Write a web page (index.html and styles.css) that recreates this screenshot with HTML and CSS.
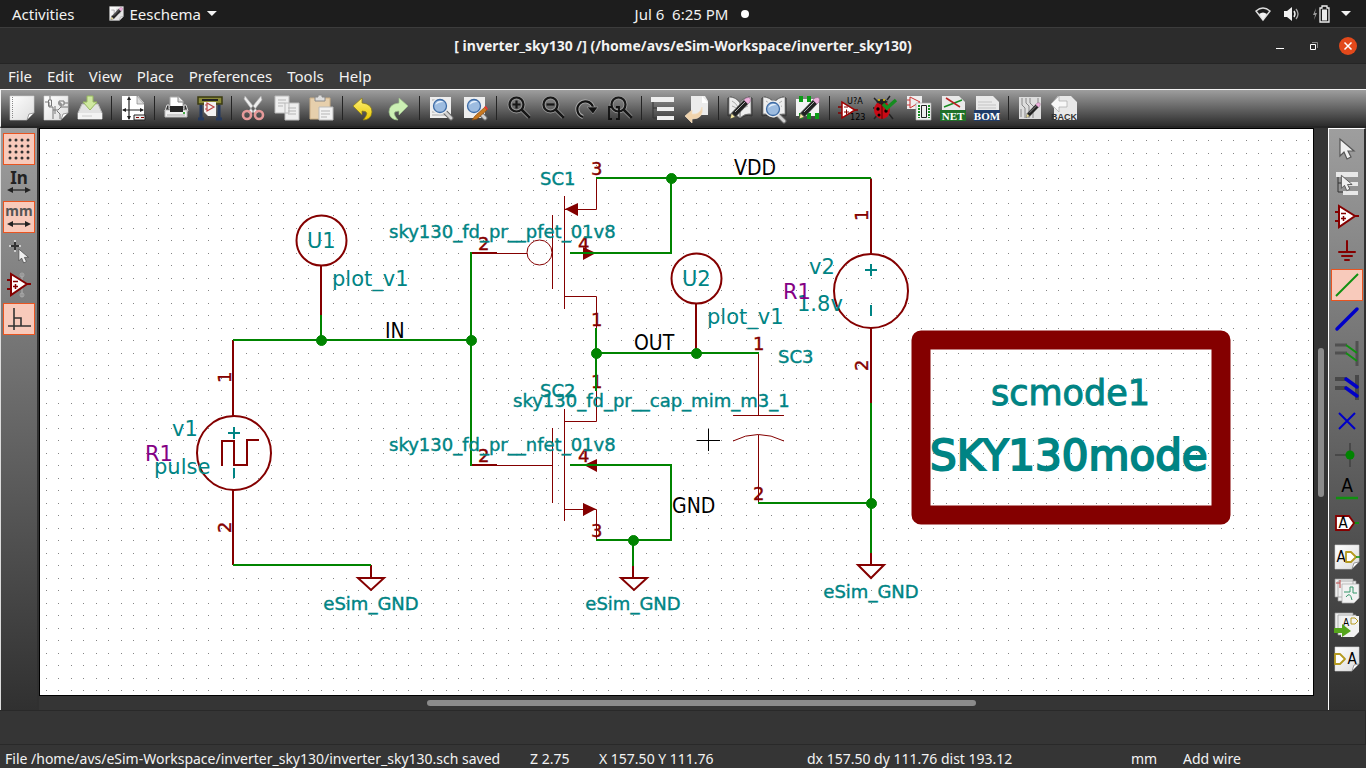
FILE: index.html
```html
<!DOCTYPE html>
<html lang="en">
<head>
<meta charset="utf-8">
<title>[ inverter_sky130 /] (/home/avs/eSim-Workspace/inverter_sky130)</title>
<link rel="stylesheet" href="styles.css">
</head>
<body>
<svg class="defs" aria-hidden="true">
  <defs>
    <linearGradient id="paper" x1="0" y1="0" x2="1" y2="1"><stop offset="0" stop-color="#fff"/><stop offset="1" stop-color="#dcdcdc"/></linearGradient>
    <linearGradient id="gold" x1="0" y1="0" x2="0" y2="1"><stop offset="0" stop-color="#fff07a"/><stop offset="1" stop-color="#e8c800"/></linearGradient>
    <symbol id="page" viewBox="0 0 26 26"><path d="M1 1h24v17l-7 7H1z" fill="url(#paper)" stroke="#d0d0d0" stroke-width=".6"/><path d="M18 25l2-6 5-1z" fill="#fff" stroke="#777" stroke-width=".7"/></symbol>
    <symbol id="lens" viewBox="0 0 26 26"><path d="M17 17l6 6" stroke="#666" stroke-width="5" stroke-linecap="round"/><path d="M17 17l6 6" stroke="#d2d2d2" stroke-width="3" stroke-linecap="round"/><circle cx="12" cy="11" r="7" fill="#a9c4e4" stroke="#eee" stroke-width="3"/><circle cx="12" cy="11" r="6.5" fill="#9dbce0" stroke="#3d6ba5" stroke-width="1.3"/><path d="M7.500 10a5 5 0 0 1 8-3q-5 0-8 3z" fill="#e8f2fc"/></symbol>
    <symbol id="darklens" viewBox="0 0 26 26"><g fill="none" stroke="#999" stroke-width="4"><circle cx="10.500" cy="9.500" r="7"/><path d="M16 15l7 7"/></g><g fill="none" stroke="#171717"><circle cx="10.500" cy="9.500" r="7" stroke-width="2.200"/><path d="M16 15l7 7" stroke-width="2.600" stroke-linecap="round"/></g></symbol>
    <symbol id="pencil" viewBox="0 0 26 26"><path d="M3 24l1.500-6 4 4z" fill="#f6e9a0" stroke="#333" stroke-width=".6"/><path d="M4.500 18L17 5l4 4L8.500 22z" fill="#222" stroke="#666" stroke-width=".6"/><path d="M8 17L19 6" stroke="#aaa"/><path d="M17 5l2-2q3-1 4 0t0 4l-2 2z" fill="#eeb0dc" stroke="#93648a" stroke-width=".6"/></symbol>
    <symbol id="book" viewBox="0 0 26 26"><path d="M1 3v18q7-2 12 3 5-5 12-3V3l-3-1q-6 1-9 6Q10 3 4 2z" fill="#555" stroke="#333"/><path d="M2 2q7 0 11 6v15Q8 18 2 19zM24 2q-7 0-11 6v15q5-5 11-4z" fill="#eee" stroke="#777" stroke-width=".7"/><path d="M5 6q4 2 6 6M5 11q4 1 6 4M21 6q-4 2-6 6M21 11q-4 1-6 4" fill="none" stroke="#aaa"/></symbol>
    <symbol id="opamp" viewBox="0 0 26 26"><path d="M1 8h5M1 17h5M20 12h5" stroke="#840000" stroke-width="2"/><path d="M5 2v21l16-11z" fill="#fff" stroke="#840000" stroke-width="2"/><path d="M7 9.500h5M7 14.500h5M9.500 12v5" stroke="#840000" stroke-width="1.500"/></symbol>
    <symbol id="pointer" viewBox="0 0 26 26"><path d="M7 3v17l4-4 3 7 4-2-3-6h6z" fill="#f0f0f0" stroke="#555" stroke-width="1.200"/></symbol>
    <symbol id="arrows" viewBox="0 0 26 26"><path d="M5 20h16" stroke="#333" stroke-width="1.500"/><path d="M1 20l6-3v6zM25 20l-6-3v6z" fill="#222"/></symbol>
    <symbol id="tag" viewBox="0 0 26 26"><path d="M1 7h5l5 5-5 5H1z" fill="#fff" stroke="#b59a20" stroke-width="1.800" stroke-linejoin="round"/></symbol>
    <pattern id="dots" x="33" y="127" width="25" height="25" patternUnits="userSpaceOnUse"><path d="M0 1h1v1H0zM13 1h1v1h-1zM0 13h1v1H0zM13 13h1v1h-1z" fill="#848484"/></pattern>
  </defs>
</svg>
<div class="desktop">
  <header class="topbar">
    <div class="top-left">
      <button>Activities</button>
      <button class="app"><svg class="small" viewBox="0 0 26 26"><use href="#page"/><path d="M4 7h5v8M4 17h6M14 5v7h6" fill="none" stroke="#888"/><use href="#pencil"/></svg>Eeschema<i class="caret"></i></button>
    </div>
    <div class="clock"><time>Jul 6&nbsp; 6:25 PM</time><i class="dot"></i></div>
    <div class="tray">
      <svg width="18" height="16" viewBox="0 0 18 16"><path d="M2 5Q9-1 16 5L9 14z" fill="none" stroke="#ddd" stroke-width="1.400"/><path d="M5 8q4-3 8 0l-4 6z" fill="#f2f2f2"/></svg>
      <svg width="18" height="16" viewBox="0 0 18 16"><path d="M1 5h3l5-4v14l-5-4H1z" fill="#f2f2f2"/><path d="M11 5q2 3 0 6" fill="none" stroke="#eee" stroke-width="1.500"/><path d="M13 3q4 5 0 10" fill="none" stroke="#aaa" stroke-width="1.300"/></svg>
      <svg width="18" height="18" viewBox="0 0 18 18"><path d="M4 3L1 10h2l-1 5 3-7H3z" fill="#999"/><path d="M10 1h5v2h2v14H8V3h2z" fill="none" stroke="#eee" stroke-width="1.300"/><path d="M10 4.500h5v11h-5z" fill="#eee"/></svg>
      <i class="caret"></i>
    </div>
  </header>
  <div class="titlebar">
    <h1>[ inverter_sky130 /] (/home/avs/eSim-Workspace/inverter_sky130)</h1>
    <div class="controls">
      <button aria-label="Minimize"><svg width="18" height="18"><path d="M5 11.500h8" stroke="#fff"/></svg></button>
      <button aria-label="Restore"><svg width="18" height="18"><path d="M7 5.500h5.500V11" fill="none" stroke="#888"/><path d="M5.500 7.500h5v5h-5z" fill="none" stroke="#fff"/></svg></button>
      <button class="close" aria-label="Close"><svg width="18" height="18"><path d="M5.500 5.500l7 7M12.500 5.500l-7 7" stroke="#fff" stroke-width="1.500"/></svg></button>
    </div>
  </div>
  <nav class="menu"><button>File</button><button>Edit</button><button>View</button><button>Place</button><button>Preferences</button><button>Tools</button><button>Help</button></nav>
  <div class="toolbar" role="toolbar">
    <button aria-label="New"><svg viewBox="0 0 26 26"><use href="#page"/><path d="M3.500 2v22" stroke="#888" stroke-dasharray="1 1"/></svg></button>
    <button aria-label="Open"><svg viewBox="0 0 26 26"><use href="#page"/><path d="M2 7h4v5h4v12M7 1v4M5.500 5h3v6h-3zM10 15h5l3-3h7M18 12V8h-3M16 6h5v4h-5zM21 8h4M12 11v8M14 16l3 3v5" fill="none" stroke="#777"/></svg></button>
    <button aria-label="Save"><svg viewBox="0 0 26 26"><path d="M5 9h16l4 9v6H1v-6z" fill="#e2e2e2" stroke="#bbb"/><path d="M1 18h24v6H1z" fill="#f3f3f3"/><path d="M5 21h10" stroke="#ccc"/><path d="M10 1h6v6h4l-7 8-7-8h4z" fill="#cfe8a0" stroke="#98b960"/></svg></button>
    <span class="sep"></span>
    <button aria-label="Page settings"><svg viewBox="0 0 26 26"><path d="M2 1h16l6 7v17H2z" fill="#fff"/><path d="M17 1v8h7z" fill="#ddd" stroke="#888" stroke-width=".7"/><path d="M3 15h20M9 3v21" stroke="#222" stroke-width="1.200"/><path d="M2 15l4-2v4zM24 15l-4-2v4zM9 1L7 5h4zM9 25l-2-4h4z" fill="#222"/><path d="M14 20h11v5H14z" fill="#eee" stroke="#222"/><path d="M16 22.500h3M21 22.500h3" stroke="#840000"/></svg></button>
    <span class="sep"></span>
    <button aria-label="Print"><svg viewBox="0 0 26 26"><path d="M7 12V2h9l4 4v6z" fill="#fff" stroke="#aaa"/><path d="M15 2v5h5" fill="#ddd" stroke="#888"/><path d="M4 10h2v4h15v-4h2l2 6H2z" fill="#333" stroke="#ddd"/><path d="M2 15h22v7H2z" fill="#f0f0f0" stroke="#bbb"/><path d="M7 11h13v6H7z" fill="#252525"/><path d="M4 20h18" stroke="#aaa"/><path d="M20 18h2" stroke="#4a4" stroke-width="2"/></svg></button>
    <button aria-label="Plot"><svg viewBox="0 0 26 26"><path d="M1 2h24v7H1z" fill="#8a8a38" stroke="#3a3a10" stroke-width="1.500"/><path d="M5 5h16" stroke="#222" stroke-width="2"/><path d="M4 10v14M22 10v14M1 24h6M19 24h6" stroke="#24385c" stroke-width="3"/><path d="M7 7h12v14h-8l-4-4z" fill="#f2f2f2"/><path d="M10 8v8l7-4zM8 10h2M8 14h2" fill="none" stroke="#b44" stroke-width="1.200"/></svg></button>
    <span class="sep"></span>
    <button aria-label="Cut"><svg viewBox="0 0 26 26"><path d="M5 1l13 16-3 2L4 4zM21 1L8 17l3 2L22 5z" fill="#eee" stroke="#aaa" stroke-width=".7"/><g fill="none" stroke="#e79a9a" stroke-width="2.600"><ellipse cx="7" cy="20" rx="4" ry="4"/><ellipse cx="19" cy="20" rx="4" ry="4"/></g></svg></button>
    <button aria-label="Copy"><svg viewBox="0 0 26 26"><path d="M1 1h14v17H1zM11 8h14v17H11z" fill="#eee" stroke="#bbb"/><path d="M4 5h8M4 8h7M4 11h5M14 13h8M14 16h8M14 19h8" stroke="#b5b5b5"/></svg></button>
    <button aria-label="Paste"><svg viewBox="0 0 26 26"><path d="M2 3h20v21H2z" fill="#e6cfac" stroke="#c9ae86"/><path d="M7 2h3V0h4v2h3v4H7z" fill="#ddd" stroke="#888"/><path d="M11 12h14v13H11z" fill="#f2f2f2" stroke="#bbb"/><path d="M13 16h9M13 19h9M13 22h6" stroke="#b5b5b5"/></svg></button>
    <span class="sep"></span>
    <button aria-label="Undo"><svg viewBox="0 0 26 26"><path d="M2 11l9-8v5q10 1 10 9-1 8-9 8 8-9-1-9v4z" fill="url(#gold)" stroke="#8d7d10" stroke-width=".7"/></svg></button>
    <button aria-label="Redo"><svg viewBox="0 0 26 26"><path d="M23 11l-9-8v5Q4 9 4 17q1 8 9 8-8-9 1-9v4z" fill="#ccefb4" stroke="#9fc48d" stroke-width=".7"/></svg></button>
    <span class="sep"></span>
    <button aria-label="Find"><svg viewBox="0 0 26 26"><path d="M2 2h21v21H2z" fill="#eee"/><path d="M4 5h4M4 9h3M4 20h14M4 17h8" stroke="#aaa"/><use href="#lens"/></svg></button>
    <button aria-label="Find and replace"><svg viewBox="0 0 26 26"><path d="M2 2h21v21H2z" fill="#eee"/><use href="#lens"/><path d="M10 25l3-4 10-9 2 3-10 9z" fill="#c87920" stroke="#8b4a10" stroke-width=".7"/><path d="M22 12l2-1 2 3-1 1z" fill="#e33"/></svg></button>
    <span class="sep"></span>
    <button aria-label="Zoom in"><svg viewBox="0 0 26 26"><use href="#darklens" x="1"/><path d="M7.500 9.500h8M11.500 5.500v8" stroke="#171717" stroke-width="2.200"/></svg></button>
    <button aria-label="Zoom out"><svg viewBox="0 0 26 26"><use href="#darklens" x="1"/><path d="M7.500 9.500h8" stroke="#171717" stroke-width="2.200"/></svg></button>
    <button aria-label="Redraw"><svg viewBox="0 0 26 26"><path d="M10 22A8 8 0 1 1 20 12" fill="none" stroke="#aaa" stroke-width="4"/><path d="M10 22A8 8 0 1 1 20 12" fill="none" stroke="#111" stroke-width="2.200"/><path d="M14 12h11l-5 7z" fill="#111" stroke="#999" stroke-width=".7"/></svg></button>
    <button aria-label="Zoom to fit"><svg viewBox="0 0 26 26"><use href="#darklens" x="1"/><path d="M5 12H2v12h3M9 12h3v12H9" fill="none" stroke="#111" stroke-width="1.800"/></svg></button>
    <span class="sep"></span>
    <button aria-label="Hierarchy"><svg viewBox="0 0 26 26"><path d="M3 5v18h4M3 13h4" fill="none" stroke="#333"/><path d="M1 2h23v5H1zM7 12h17v4H7zM7 21h17v4H7z" fill="#eee"/></svg></button>
    <button aria-label="Leave sheet"><svg viewBox="0 0 26 26"><path d="M7 1h14l3 5v14H7z" fill="#ececec"/><path d="M18 1v7h6z" fill="#fff"/><path d="M1 21l7-6v4q8 1 10-7 2 12-10 12v4z" fill="#f0d3ac" stroke="#f4dfc4" stroke-width=".7"/></svg></button>
    <span class="sep"></span>
    <button aria-label="Symbol editor"><svg viewBox="0 0 26 26"><use href="#book"/><use href="#pencil"/></svg></button>
    <button aria-label="Browse symbols"><svg viewBox="0 0 26 26"><use href="#book"/><use href="#lens" y="3"/></svg></button>
    <button aria-label="Footprint editor"><svg viewBox="0 0 26 26"><path d="M1 4h23v17H1z" fill="#f2f2f2"/><path d="M4 1h4v6H4zM12 1h4v6h-4zM4 18h4v6H4zM12 18h4v6h-4zM20 18h4v6h-4z" fill="#0b9b16"/><use href="#pencil" x="1"/></svg></button>
    <span class="sep"></span>
    <button aria-label="Annotate"><svg viewBox="0 0 26 26"><path d="M0 12h4M0 18h4M16 15h4" stroke="#840000" stroke-width="1.500"/><path d="M4 7v16l13-8z" fill="#fff" stroke="#a00000" stroke-width="1.500"/><path d="M6 12h4M6 17h5M8.500 14.500v5" stroke="#840000"/><text x="9" y="9" class="tiny">U?A</text><text x="12" y="25" class="tiny">123</text></svg></button>
    <button aria-label="Electrical rules check"><svg viewBox="0 0 26 26"><path d="M2 3l5 5M1 13h5M2 24l5-6M17 19l4 5M15 5l3-4" stroke="#222" stroke-width="1.500"/><ellipse cx="10" cy="15" rx="8" ry="9" fill="#c90a16"/><path d="M4 7q6-6 12 0l-6 3z" fill="#222"/><path d="M6 5h2M11 5h2" stroke="#e8c800" stroke-width="1.500"/><path d="M10 8v16" stroke="#500"/><circle cx="6" cy="14" r="1.700"/><circle cx="14" cy="16" r="1.700"/><circle cx="7" cy="20" r="1.500"/><path d="M11 9l4 4 9-8" fill="none" stroke="#168c20" stroke-width="3.500"/></svg></button>
    <button aria-label="Assign footprints"><svg viewBox="0 0 26 26"><path d="M1 1h15v13H1z" fill="#eee"/><path d="M1 5h3M1 10h3M4 2v11l10-6z" fill="none" stroke="#c33"/><path d="M10 8h15v17H10z" fill="#f4f4f4" stroke="#aaa" stroke-width=".7"/><path d="M15.500 10.500h5v12h-5z" fill="#eee" stroke="#222"/><path d="M13 10v13M23 10v13" stroke="#168c20" stroke-width="2" stroke-dasharray="2 1"/></svg></button>
    <button aria-label="Generate netlist"><svg viewBox="0 0 26 26"><path d="M2 1h17l6 6v10H2z" fill="#e9e9e9"/><path d="M4 12L22 5" stroke="#168c20" stroke-width="1.500"/><path d="M6 3l14 9" stroke="#b22" stroke-width="1.500"/><path d="M0 15h26v11H0z" fill="#207028"/><text x="13" y="25" class="badge">NET</text></svg></button>
    <button aria-label="Bill of materials"><svg viewBox="0 0 26 26"><path d="M2 1h17l6 6v10H2z" fill="#e9e9e9"/><path d="M4 7h14M4 10h18M4 13h18" stroke="#c3c3c3"/><path d="M0 15h26v11H0z" fill="#203c68"/><text x="13" y="25" class="badge">BOM</text></svg></button>
    <span class="sep"></span>
    <button aria-label="Open board editor"><svg viewBox="0 0 26 26"><path d="M2 2h22v22H2z" fill="#ddd"/><path d="M5 3v7l3 3v10M9 3v5l3 3v12M13 3v5l4 4M21 3v8l-5 5v7M4 14v8" fill="none" stroke="#888"/><use href="#pencil" x="7" y="6" width="18" height="18"/></svg></button>
    <button aria-label="Back annotate"><svg viewBox="0 0 26 26"><path d="M7 1h13l6 6v18H3V13L0 9z" fill="#e8e8e8"/><path d="M0 9l8-8v5h8v6H8v5z" fill="#f8f8f8" stroke="#aaa" stroke-width=".7"/><text x="13" y="25" class="back">BACK</text></svg></button>
  </div>
  <main class="workspace">
    <div class="side" role="toolbar">
      <button class="on" aria-label="Grid"><svg viewBox="0 0 26 26"><path d="M4 4h20M4 10h20M4 16h20M4 22h20" stroke="#333" stroke-width="3" stroke-linecap="round" stroke-dasharray="0 6"/></svg></button>
      <button aria-label="Inches"><svg viewBox="0 0 26 26"><text x="13" y="14" class="unit">In</text><use href="#arrows"/></svg></button>
      <button class="on" aria-label="Millimetres"><svg viewBox="0 0 26 26"><text x="13" y="12" class="unit mm">mm</text><use href="#arrows"/></svg></button>
      <button aria-label="Cursor shape"><svg viewBox="0 0 26 26"><path d="M9 2v12M3 8h12" stroke="#ccc" stroke-width="2"/><path d="M9 4v8M5 8h8" stroke="#333" stroke-width="2"/><use href="#pointer" x="8" y="9" width="18" height="18"/></svg></button>
      <button aria-label="Hidden pins"><svg viewBox="0 0 26 26"><path d="M16 2v23" stroke="#999" stroke-width="2"/><circle cx="16" cy="3" r="2" fill="none" stroke="#aaa"/><circle cx="16" cy="23" r="2" fill="none" stroke="#aaa"/><use href="#opamp"/></svg></button>
      <button class="on" aria-label="Orthogonal wires"><svg viewBox="0 0 26 26"><path d="M8 2v22M2 20h23M8 12h7v8" fill="none" stroke="#333" stroke-width="1.600"/></svg></button>
    </div>
    <div class="canvas">
      <svg class="sheet" role="img" aria-label="Schematic">
        <g transform="translate(-40 -129)">
          <path d="M33 127h2560v1440H33z" fill="url(#dots)"/>
          <path d="M921 340h300v175H921z" fill="none" stroke="#840000" stroke-width="19" stroke-linejoin="round"/>
          <g class="thin">
            <path d="M552.500 215v74M564.500 196v113M564 209.500h32.500V179M497 253.500h30M564 296.500h32.500V328"/>
            <circle cx="539.500" cy="252.500" r="12.500"/>
            <path d="M552.500 428v75M564.500 409v112M564 421.500h32.500V391M564 509.500h32.500V540M497 465.500h55"/>
            <path d="M758.500 353v62M733 415.500h51M733 441q25-13 51 0M758.500 435v68"/>
          </g>
          <path class="solid" d="M565 209l13-6v13zM596 253l-13-6v13zM596 509l-13-6v13zM584 465l13-6v13z"/>
          <g class="part">
            <circle cx="321.500" cy="240.500" r="25"/><circle cx="696.500" cy="278.500" r="25"/><circle cx="234" cy="453" r="37"/><circle cx="871" cy="291" r="37"/>
            <path d="M321 265v50M696 303v50M233 340v76M233 490v75M871 179v75M871 328v75M471 253h26M471 465h26"/>
            <path d="M222 466v-25h12v24h13v-25h12"/>
            <path d="M371 565v12M358 578h26l-13 12zM633 566v11M621 578h26l-13 12zM871 553v11M858 565h26l-13 13z"/>
          </g>
          <g class="pin">
            <text x="591" y="175">3</text><text x="478" y="250">2</text><text x="578" y="250">4</text><text x="591" y="326">1</text><text x="591" y="388">1</text><text x="478" y="462">2</text><text x="578" y="462">4</text><text x="591" y="537">3</text><text x="753" y="350">1</text><text x="753" y="500">2</text>
            <text transform="translate(231 383) rotate(-90)">1</text><text transform="translate(231 533) rotate(-90)">2</text><text transform="translate(868 221) rotate(-90)">1</text><text transform="translate(868 371) rotate(-90)">2</text>
          </g>
          <g class="wire">
            <path d="M233 340h238M321 340v-25M471 252v214M596 178h275M671 178v75H570M596 328v63M596 353h163M570 465h101v75h-75M633 540v26M758 503h113M871 403v150M233 565h138"/>
            <circle cx="321.500" cy="340.500" r="5"/><circle cx="471.500" cy="340.500" r="5"/><circle cx="671.500" cy="178.500" r="5"/><circle cx="596.500" cy="353.500" r="5"/><circle cx="696.500" cy="353.500" r="5"/><circle cx="633.500" cy="540.500" r="5"/><circle cx="871.500" cy="503.500" r="5"/>
          </g>
          <g class="value">
            <text x="540" y="185">SC1</text><text x="389" y="238">sky130_fd_pr__pfet_01v8</text><text x="540" y="397">SC2</text><text x="513" y="407">sky130_fd_pr__cap_mim_m3_1</text><text x="389" y="451">sky130_fd_pr__nfet_01v8</text><text x="778" y="363">SC3</text>
            <text x="371" y="610" class="mid">eSim_GND</text><text x="633" y="610" class="mid">eSim_GND</text><text x="871" y="598" class="mid">eSim_GND</text>
          </g>
          <g class="field">
            <text x="307" y="248">U1</text><text x="332" y="286">plot_v1</text><text x="682" y="286">U2</text><text x="707" y="324">plot_v1</text><text x="172" y="436">v1</text><text x="154" y="474">pulse</text><text x="809" y="274">v2</text><text x="797" y="311">1.8v</text>
            <text x="145" y="461" class="model">R1</text><text x="783" y="299" class="model">R1</text>
          </g>
          <path class="sign" d="M228 433h12M234 427v12M234 468v10M865 270h12M871 264v12M871 305v11"/>
          <g class="net"><text x="385" y="338">IN</text><text x="634" y="350">OUT</text><text x="672" y="513">GND</text><text x="734" y="175">VDD</text></g>
          <g class="heavy"><text x="991" y="405" class="h1">scmode1</text><text x="930" y="470" class="h2">SKY130mode</text></g>
          <path d="M708.500 429v22M697 440.500h23" stroke="#000"/>
        </g>
      </svg>
    </div>
    <div class="vscroll"><i></i></div>
    <div class="side right" role="toolbar">
      <button aria-label="Select"><svg viewBox="0 0 26 26"><use href="#pointer" x="-1"/></svg></button>
      <button aria-label="Navigate hierarchy"><svg viewBox="0 0 26 26"><path d="M4 5v17h5M4 13h5" fill="none" stroke="#333"/><path d="M2 2h22v5H2zM9 12h15v4H9zM9 21h15v4H9z" fill="#e8e8e8"/><use href="#pointer" x="2" y="3" width="20" height="20"/></svg></button>
      <button aria-label="Place symbol"><svg viewBox="0 0 26 26"><use href="#opamp"/></svg></button>
      <button aria-label="Place power port"><svg viewBox="0 0 26 26"><path d="M13 3v11M5 14h16M8 18h10M11 22h4" stroke="#840000" stroke-width="2" stroke-linecap="round"/></svg></button>
      <button class="on" aria-label="Place wire"><svg viewBox="0 0 26 26"><path d="M2 24L24 2" stroke="#109010" stroke-width="2"/></svg></button>
      <button aria-label="Place bus"><svg viewBox="0 0 26 26"><path d="M3 23L23 3" stroke="#0000c8" stroke-width="3.500" stroke-linecap="round"/></svg></button>
      <button aria-label="Wire to bus entry"><svg viewBox="0 0 26 26"><path d="M1 5h12M1 13h12M23 1v25" stroke="#505050" stroke-width="3"/><path d="M12 5l11 8M12 13l11 8" stroke="#109010" stroke-width="2"/></svg></button>
      <button aria-label="Bus to bus entry"><svg viewBox="0 0 26 26"><path d="M1 5h12M1 14h12M23 1v25" stroke="#484848" stroke-width="4"/><path d="M12 5l11 8M12 14l11 8" stroke="#0000c8" stroke-width="3.500" stroke-linecap="round"/></svg></button>
      <button aria-label="No-connect flag"><svg viewBox="0 0 26 26"><path d="M5 5l16 16M21 5L5 21" stroke="#0000c8" stroke-width="2"/></svg></button>
      <button aria-label="Junction"><svg viewBox="0 0 26 26"><path d="M16 1v24M1 13h15" stroke="#484848" stroke-width="2"/><circle cx="16" cy="13" r="4.500" fill="#008400"/></svg></button>
      <button aria-label="Net label"><svg viewBox="0 0 26 26"><text x="13" y="16" class="letter big">A</text><path d="M2 22h22" stroke="#109010" stroke-width="2.500"/></svg></button>
      <button aria-label="Global label"><svg viewBox="0 0 26 26"><path d="M20 13h5" stroke="#109010" stroke-width="2"/><path d="M2 6h13l5 7-5 7H2z" fill="#fff" stroke="#840000" stroke-width="1.800"/><text x="9" y="18" class="letter">A</text></svg></button>
      <button aria-label="Hierarchical label"><svg viewBox="0 0 26 26"><use href="#page"/><text x="7" y="18" class="letter">A</text><use href="#tag" x="11" y="1"/><path d="M22 13h4" stroke="#109010" stroke-width="1.500"/></svg></button>
      <button aria-label="Hierarchical sheet"><svg viewBox="0 0 26 26"><path d="M1 1h18v18H1zM4 3h18v20H4z" fill="#eee" stroke="#999" stroke-width=".7"/><path d="M2 5h4M6 2v8" stroke="#b44"/><path d="M8 6h17v14l-5 5H8z" fill="#f2f2f2" stroke="#aaa" stroke-width=".7"/><path d="M10 14h6v-5h3v6h4M12 19q4-6 6 3" fill="none" stroke="#35986a"/></svg></button>
      <button aria-label="Import hierarchical pin"><svg viewBox="0 0 26 26"><path d="M1 1h18v18H1zM4 3h18v20H4z" fill="#eee" stroke="#999" stroke-width=".7"/><path d="M7 4h18v16l-5 5H7z" fill="#f2f2f2"/><text x="12" y="14" class="letter tiny-a">A</text><path d="M17 6h4l3 3-3 3h-4z" fill="none" stroke="#b59a20"/><path d="M0 16h8v-4l9 7-9 6v-4H0z" fill="#55a51c"/></svg></button>
      <button aria-label="Sheet pin"><svg viewBox="0 0 26 26"><use href="#page"/><use href="#tag" y="1"/><text x="18" y="18" class="letter">A</text></svg></button>
    </div>
    <div class="hscroll"><i></i></div>
  </main>
  <div class="messages"></div>
  <footer class="status"><span>File /home/avs/eSim-Workspace/inverter_sky130/inverter_sky130.sch saved</span><span>Z 2.75</span><span>X 157.50&nbsp;Y 111.76</span><span>dx 157.50&nbsp;dy 111.76&nbsp;dist 193.12</span><span>mm</span><span>Add wire</span></footer>
</div>
</body>
</html>
```
FILE: styles.css
```css
* { box-sizing: border-box; }
body { margin: 0; background: #353535; color: #f2f2f2; font: 14px/20px "Noto Sans", sans-serif; }
button { border: 0; padding: 0; background: none; color: inherit; font: inherit; }
h1 { margin: 0; font-size: 14px; line-height: 20px; font-weight: 700; }
i { display: block; }
.defs { position: absolute; width: 0; height: 0; }
.desktop { min-height: 100vh; display: flex; flex-direction: column; }

.topbar { height: 27px; padding: 0 15px 0 12px; background: #1d1d1d; display: grid; grid-template-columns: 1fr auto 1fr; align-items: center; }
.topbar, .menu { font-size: 15px; }
.top-left { display: flex; gap: 34px; }
.app { display: flex; align-items: center; gap: 6px; }
.small { width: 15px; height: 15px; }
.caret { width: 10px; height: 5px; background: #f2f2f2; clip-path: polygon(0 0, 100% 0, 50% 100%); }
.clock { display: flex; align-items: center; gap: 13px; padding-left: 21px; }
.dot { width: 8px; height: 8px; border-radius: 50%; background: #fff; }
.tray { display: flex; justify-content: flex-end; align-items: center; gap: 11px; }

.titlebar { height: 37px; padding: 0 9px; background: #2c2c2c; border-top: 1px solid #3c3c3c; border-bottom: 1px solid #252525; display: grid; grid-template-columns: 1fr auto 1fr; align-items: center; }
.titlebar h1 { grid-column: 2; }
.controls { display: flex; justify-content: flex-end; gap: 16px; }
.controls button { width: 18px; height: 18px; border-radius: 50%; }
.controls svg { display: block; }
.controls .close { background: #e2491b; }

.menu { height: 25px; padding: 2px 8px 3px; display: flex; gap: 15px; background: #3b3b3b; }
.toolbar { height: 39px; padding-left: 4px; display: flex; align-items: center; background: linear-gradient(#9e9e9e, #2c2c2c); border: solid #f4f4f4; border-width: 1px 0 0 1px; border-bottom: 2px solid #252525; }
.toolbar button { width: 34px; height: 34px; }
.toolbar svg, .side svg { display: block; width: 26px; height: 26px; margin: auto; overflow: visible; }
.sep { width: 1px; height: 24px; margin: 0 4px; background: #242424; }

.workspace { flex: 1; display: grid; grid-template-columns: 39px 1fr 14px 38px; grid-template-rows: 1fr 14px; }
.side { grid-row: 1 / 3; grid-column: 1; padding: 5px 2px 0; display: flex; flex-direction: column; gap: 2px; background: linear-gradient(#9e9e9e, #303030); border-left: 1px solid #ddd; border-right: 2px solid #303030; }
.side button { height: 32px; width: 32px; }
.side .on { background: #f8cabb; border: 1px solid #e95420; }
.right { grid-column: 4; border-left-color: #fff; border-top: 1px solid #fff; padding-top: 4px; }
.canvas { min-width: 0; min-height: 0; border: 1px solid #000; background: #fff; display: flex; }
.sheet { width: 100%; height: auto; min-height: 400px; flex: 1; }
.vscroll { display: grid; grid-template-rows: 220fr 149fr 213fr; grid-row: 1 / 3; grid-column: 3; justify-items: center; }
.vscroll i { grid-row: 2; width: 6px; border-radius: 3px; background: #8b8b8b; }
.hscroll { grid-column: 2; grid-row: 2; display: grid; grid-template-columns: 388fr 549fr 338fr; align-items: center; }
.hscroll i { grid-column: 2; height: 6px; border-radius: 3px; background: #8b8b8b; }
.messages { height: 35px; border: 1px solid #292929; border-width: 1px 1px 1px 0; }
.status { padding: 4px 5px 0; height: 23px; line-height: 19px; display: grid; grid-template-columns: 525fr 69fr 208fr 324fr 52fr 178fr; white-space: nowrap; }

.tiny { font: 9px "DejaVu Sans Condensed", sans-serif; }
.badge { font: bold 11px "Liberation Serif", serif; fill: #fff; text-anchor: middle; }
.back { font: bold 9px "Liberation Sans", sans-serif; fill: #333; text-anchor: middle; }
.unit { font: bold 17px "Noto Sans", sans-serif; fill: #222; text-anchor: middle; }
.mm { font-size: 14px; fill: #555; }
.letter { font: 15px "DejaVu Sans Condensed", sans-serif; text-anchor: middle; }
.big { font-size: 19px; }
.tiny-a { font-size: 10px; }

.thin { fill: none; stroke: #840000; stroke-width: 1; }
.solid { fill: #840000; }
.part { fill: none; stroke: #840000; stroke-width: 2; }
.wire { fill: #008400; }
.wire path { fill: none; stroke: #008400; stroke-width: 2; }
.wire circle { stroke: #008400; stroke-width: 1; }
.sign { fill: none; stroke: #008484; stroke-width: 2; }
.pin, .value { font: 18px "DejaVu Sans", sans-serif; }
.pin { fill: #840000; stroke: #840000; stroke-width: .4; }
.value, .field { fill: #008484; }
.value { stroke: #008484; stroke-width: .4; }
.mid { text-anchor: middle; }
.field { font: 21px "DejaVu Sans", sans-serif; }
.model { fill: #840084; }
.net { font: 21px "DejaVu Sans Condensed", sans-serif; fill: #000; }
.heavy { font-family: "DejaVu Sans", sans-serif; fill: #008484; stroke: #008484; stroke-width: 2; }
.h1 { font-size: 35px; stroke-width: 1; }
.h2 { font-size: 42px; }
```
